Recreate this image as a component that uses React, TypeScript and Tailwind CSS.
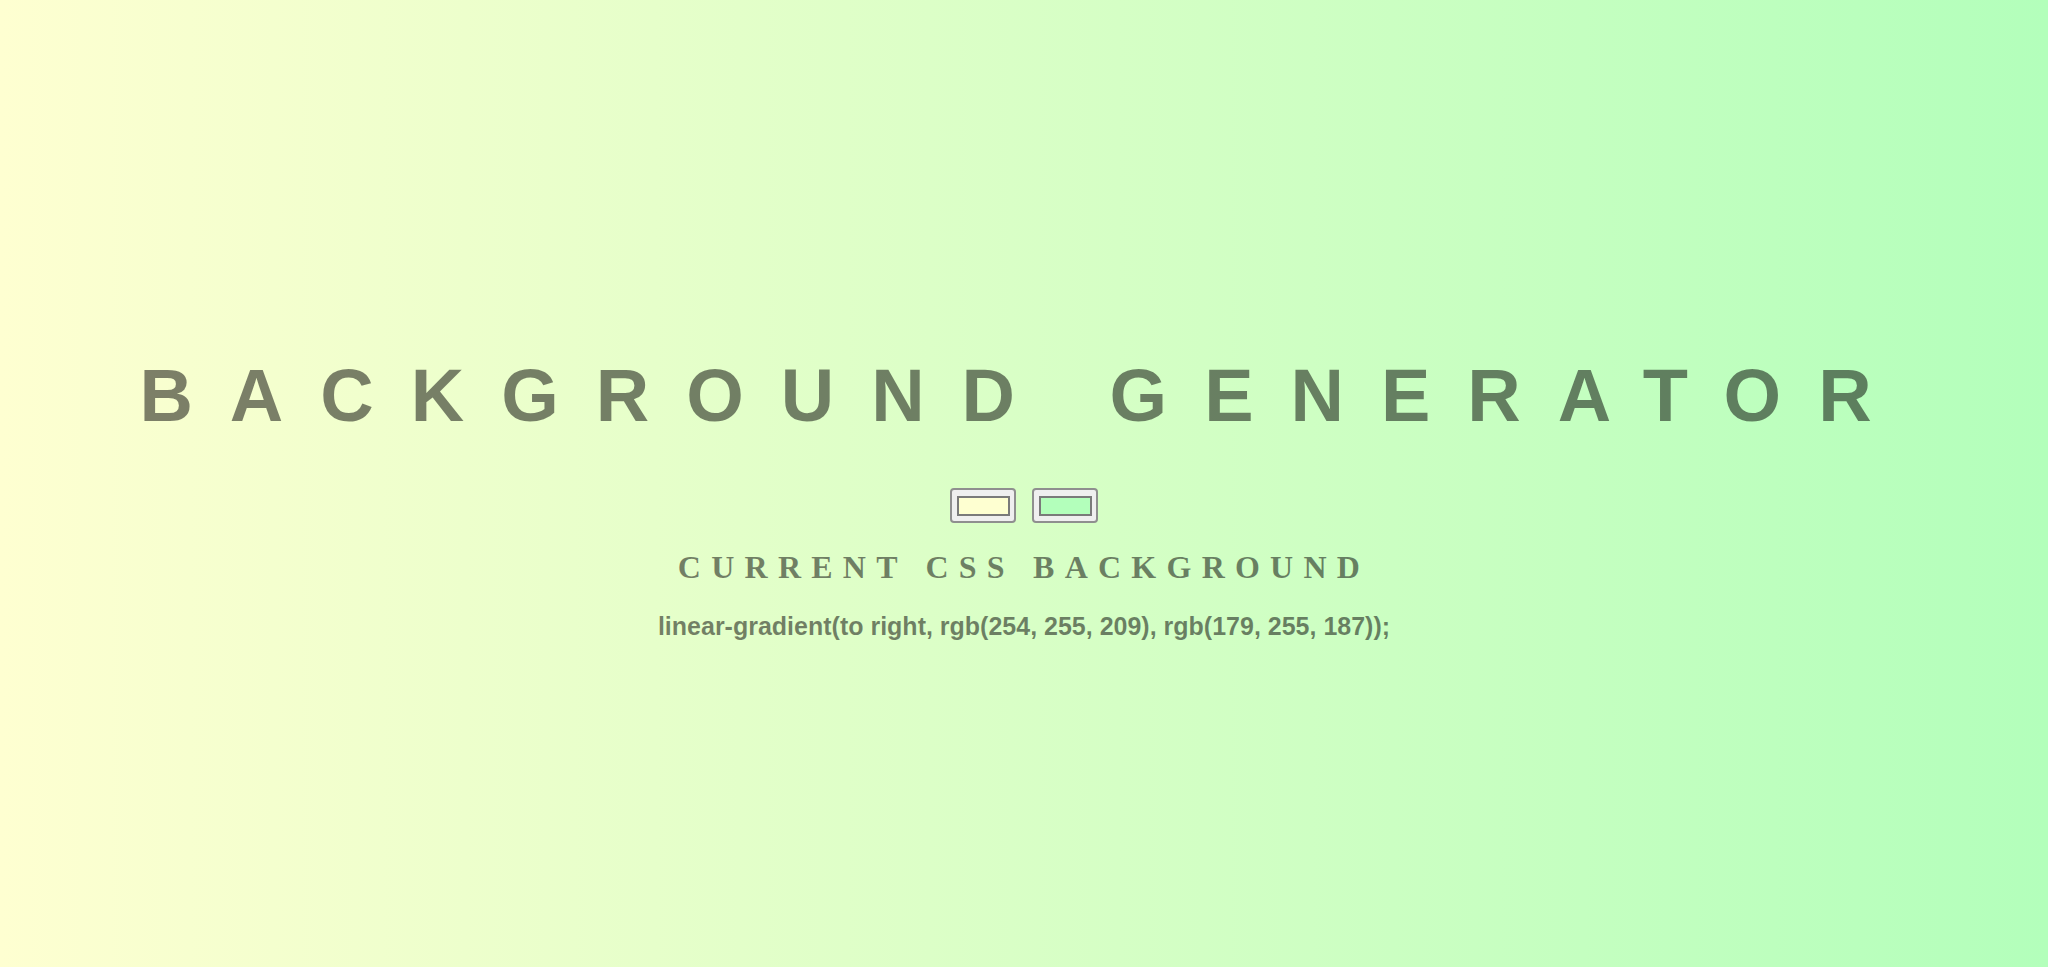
import { useState } from 'react'

const toRgb = (hex: string) => {
  const n = parseInt(hex.slice(1), 16)
  return `rgb(${(n >> 16) & 255}, ${(n >> 8) & 255}, ${n & 255})`
}

const ColorPick = ({ value, onChange }: { value: string; onChange: (v: string) => void }) => (
  <input
    type="color"
    value={value}
    onChange={(e) => onChange(e.target.value)}
    className="h-[35px] w-[66px] cursor-pointer rounded-[4px] border-2 border-[#8f8f8f] bg-[#efefef] px-[4.5px] py-[5.5px] [&::-webkit-color-swatch-wrapper]:p-0 [&::-webkit-color-swatch]:rounded-none [&::-webkit-color-swatch]:border-2 [&::-webkit-color-swatch]:border-[#7a7a7a]"
  />
)

export default function App() {
  const [left, setLeft] = useState('#feffd1')
  const [right, setRight] = useState('#b3ffbb')
  const css = `linear-gradient(to right, ${toRgb(left)}, ${toRgb(right)})`

  return (
    <div
      className="flex h-screen w-full flex-col items-center overflow-hidden pt-[359px] text-black/50"
      style={{ background: css }}
    >
      <h1 className="mb-[55px] whitespace-nowrap text-center font-['Liberation_Sans',Arial,sans-serif] text-[74px] leading-none font-bold tracking-[0.5em]">
        BACKGROUND GENERATOR
      </h1>

      <div className="mb-[28px] flex gap-4">
        <ColorPick value={left} onChange={setLeft} />
        <ColorPick value={right} onChange={setRight} />
      </div>

      <h3 className="mb-[31px] whitespace-nowrap font-['Liberation_Serif','Times_New_Roman',serif] text-[32px] leading-none font-bold tracking-[0.32em]">
        CURRENT CSS BACKGROUND
      </h3>

      <p className="whitespace-nowrap font-['Liberation_Sans',Arial,sans-serif] text-[25px] leading-none font-bold">
        {css};
      </p>
    </div>
  )
}
